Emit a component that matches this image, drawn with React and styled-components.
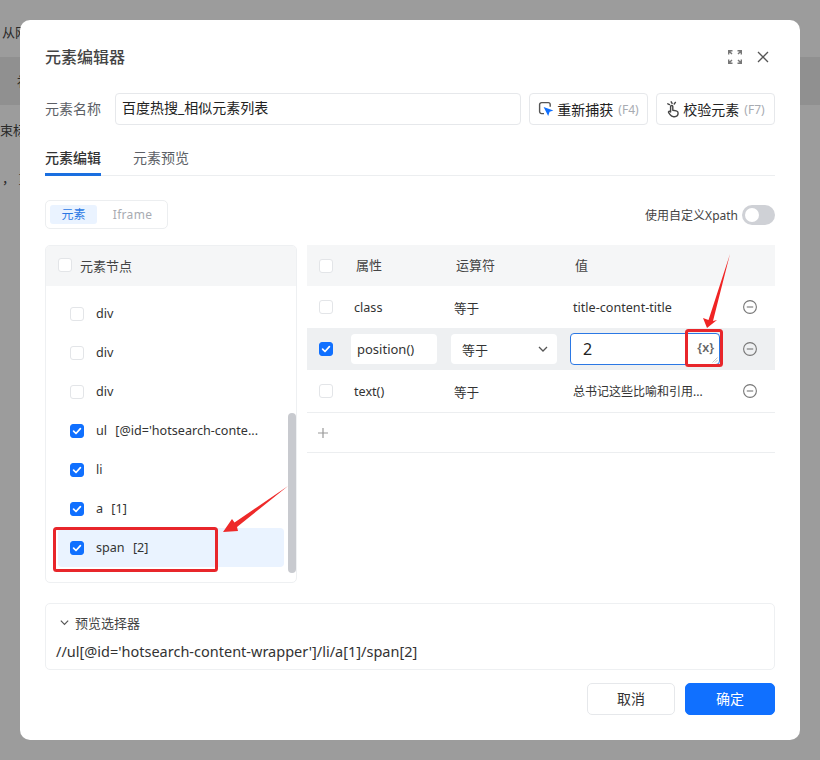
import React from 'react'
import styled, { createGlobalStyle } from 'styled-components'

const GlobalStyle = createGlobalStyle`
  html, body { margin: 0; padding: 0; height: 100%; overflow: hidden; background: #fff; }
  body, input, button { font-family: "Noto Sans", "Noto Sans CJK SC", sans-serif; }
  * { box-sizing: border-box; }
`

const BLUE = '#1070ff'

const BehindPage = styled.div`
  height: 760px;
  overflow: hidden;
  font-size: 13px;
  color: #444;
`
const BehindLine = styled.div`
  height: ${p => p.$h}px;
  line-height: ${p => p.$h}px;
  padding-left: ${p => p.$left || 0}px;
  background: ${p => p.$band ? '#ebebeb' : 'transparent'};
  white-space: nowrap;
`
const Mask = styled.div`
  position: fixed;
  inset: 0;
  background: rgba(0, 0, 0, 0.39);
`
const Modal = styled.div`
  position: fixed;
  left: 20px;
  top: 20px;
  width: 780px;
  height: 720px;
  padding: 23px 25px 0;
  background: #fff;
  border-radius: 10px;
  display: flex;
  flex-direction: column;
`
const TitleRow = styled.div`
  height: 28px;
  display: flex;
  align-items: center;
  justify-content: space-between;
`
const Title = styled.div`
  font-size: 16px;
  font-weight: 500;
  color: #444;
  margin-top: -2px;
`
const TitleTools = styled.div`
  display: flex;
  align-items: center;
  gap: 15px;
  padding-right: 6px;
`
const NameRow = styled.div`
  margin-top: 22px;
  height: 32px;
  display: flex;
  align-items: center;
  gap: 8px;
`
const NameLabel = styled.div`
  width: 62px;
  font-size: 14px;
  color: #5c5f66;
  margin-top: -2px;
`
const NameInput = styled.div`
  flex: 1;
  height: 32px;
  line-height: 28px;
  padding-left: 6px;
  border: 1px solid #e6e8eb;
  border-radius: 4px;
  font-size: 14px;
  color: #222;
`
const ToolButton = styled.div`
  width: 119px;
  height: 32px;
  display: flex;
  align-items: center;
  justify-content: center;
  gap: 3px;
  border: 1px solid #e6e8eb;
  border-radius: 4px;
  font-size: 14px;
  color: #222;
  white-space: nowrap;
`
const Shortcut = styled.span`
  font-size: 12px;
  color: #a8abb2;
  margin-left: 2px;
`
const Tabs = styled.div`
  margin-top: 17px;
  height: 34px;
  display: flex;
  gap: 32px;
  border-bottom: 1px solid #eceef0;
`
const Tab = styled.div`
  height: 34px;
  line-height: 32px;
  font-size: 14px;
  font-weight: ${p => p.$active ? 500 : 400};
  color: ${p => p.$active ? '#333' : '#5c5f66'};
  border-bottom: 3px solid ${p => p.$active ? '#1a6fe0' : 'transparent'};
`
const ModeRow = styled.div`
  margin-top: 24px;
  height: 29px;
  display: flex;
  align-items: center;
  justify-content: space-between;
`
const Segment = styled.div`
  width: 123px;
  height: 29px;
  padding: 4px;
  display: flex;
  align-items: center;
  border: 1px solid #eceef0;
  border-radius: 5px;
`
const SegmentItem = styled.div`
  flex: none;
  width: ${p => p.$active ? 47 : 71}px;
  height: 19px;
  line-height: 19px;
  text-align: center;
  font-size: 12px;
  border-radius: 3px;
  color: ${p => p.$active ? '#2b78e4' : '#a8abb2'};
  background: ${p => p.$active ? '#eaf3ff' : 'transparent'};
  letter-spacing: ${p => p.$active ? 0 : '0.3px'};
`
const SwitchGroup = styled.div`
  display: flex;
  align-items: center;
  gap: 4px;
  font-size: 12px;
  color: #444;
`
const SwitchTrack = styled.div`
  width: 33px;
  height: 20px;
  padding: 3px;
  border-radius: 10px;
  background: #cfd1d6;
`
const SwitchKnob = styled.div`
  width: 14px;
  height: 14px;
  border-radius: 50%;
  background: #fff;
`
const Panels = styled.div`
  margin-top: 16px;
  height: 338px;
  display: flex;
  gap: 10px;
`
const NodePanel = styled.div`
  position: relative;
  width: 252px;
  border: 1px solid #eef0f2;
  border-radius: 5px;
  overflow: hidden;
`
const PanelHead = styled.div`
  height: 40px;
  padding: 0 0 2px 12px;
  display: flex;
  align-items: center;
  gap: 8px;
  background: #f5f6f7;
  font-size: 13px;
  color: #444;
`
const NodeList = styled.div`
  padding: 8px 0 0 12px;
`
const NodeRow = styled.div`
  width: 226px;
  height: 39px;
  padding-left: 12px;
  display: flex;
  align-items: center;
  gap: 12px;
  border-radius: 4px;
  background: ${p => p.$selected ? '#eaf3ff' : 'transparent'};
  font-size: 12.6px;
  color: #333;
  white-space: nowrap;
`
const NodeName = styled.span`
  word-spacing: 5px;
`
const ScrollThumb = styled.div`
  position: absolute;
  right: 0;
  top: 167px;
  width: 8px;
  height: 160px;
  border-radius: 4px;
  background: #c8cacf;
`
const Box = styled.span`
  flex: none;
  width: 14px;
  height: 14px;
  display: inline-flex;
  align-items: center;
  justify-content: center;
  border-radius: 3px;
  background: ${p => p.$on ? BLUE : '#fff'};
  border: 1px solid ${p => p.$on ? BLUE : '#e3e5e8'};
`
const AttrPanel = styled.div`
  flex: 1;
`
const AttrRow = styled.div`
  height: ${p => p.$h || 42}px;
  display: grid;
  grid-template-columns: 44px 100px 119px 150px 1fr;
  align-items: center;
  background: ${p => p.$head ? '#f5f6f7' : p.$active ? '#eef0f2' : 'transparent'};
  border-bottom: ${p => p.$line ? '1px solid #eceef0' : 'none'};
  font-size: 12.6px;
  color: #333;
`
const BoxCell = styled.div`
  padding-left: 12px;
  display: flex;
`
const HeadCell = styled.div`
  padding: 0 0 3px 5px;
  font-size: 13px;
  color: #444;
`
const TextCell = styled.div`
  padding-left: 3px;
  white-space: nowrap;
  font-size: ${p => p.$small ? '12px' : 'inherit'};
`
const FieldBox = styled.div`
  width: ${p => p.$w}px;
  height: 30px;
  padding: 0 8px 0 ${p => p.$pad}px;
  display: flex;
  align-items: center;
  justify-content: space-between;
  background: #fff;
  border-radius: 4px;
  font-size: 13px;
  color: #333;
`
const ValueField = styled.div`
  position: relative;
  width: 150px;
  height: 32px;
  padding-left: 12px;
  line-height: 30px;
  border: 1px solid #2b78e4;
  border-radius: 4px;
  background: #fff;
  font-size: 16px;
  color: #222;
`
const VarTag = styled.span`
  position: absolute;
  right: 5px;
  top: -1px;
  font-size: 12.5px;
  font-weight: 600;
  color: #666;
`
const Grip = styled.svg`
  position: absolute;
  right: 1px;
  bottom: 1px;
`
const ActionCell = styled.div`
  display: flex;
  justify-content: center;
  padding-left: 5px;
`
const AddRow = styled.div`
  height: 40px;
  padding-left: 10px;
  display: flex;
  align-items: center;
  border-bottom: 1px solid #eceef0;
`
const Preview = styled.div`
  margin-top: 20px;
  height: 67px;
  padding: 7px 10px;
  border: 1px solid #eef0f2;
  border-radius: 5px;
`
const PreviewHead = styled.div`
  height: 22px;
  display: flex;
  align-items: center;
  gap: 5px;
  padding-left: 3px;
  font-size: 13px;
  color: #444;
`
const PreviewPath = styled.div`
  margin-top: 8px;
  font-size: 14.5px;
  color: #333;
  white-space: nowrap;
`
const Footer = styled.div`
  margin-top: 13px;
  display: flex;
  justify-content: flex-end;
  gap: 10px;
`
const FootButton = styled.div`
  width: ${p => p.$primary ? 90 : 88}px;
  height: 32px;
  line-height: 29px;
  text-align: center;
  border-radius: 5px;
  font-size: 14px;
  color: ${p => p.$primary ? '#fff' : '#333'};
  background: ${p => p.$primary ? BLUE : '#fff'};
  border: 1px solid ${p => p.$primary ? BLUE : '#e6e8eb'};
`
const Marks = styled.svg`
  position: fixed;
  left: 0;
  top: 0;
  pointer-events: none;
`

const Check = ({ on }) => (
  <Box $on={on}>
    {on && (
      <svg width="10" height="10" viewBox="0 0 10 10" fill="none">
        <path d="M1.6 5.2 4 7.5l4.4-4.9" stroke="#fff" strokeWidth="1.7" strokeLinecap="round" strokeLinejoin="round" />
      </svg>
    )}
  </Box>
)

const ExpandIcon = () => (
  <svg width="14" height="14" viewBox="0 0 14 14" fill="none" stroke="#777" strokeWidth="1.4">
    <path d="M0.7 4.5V0.7H4.5M0.9 0.9 4 4" />
    <path d="M9.5 0.7h3.8v3.8M13.1 0.9 10 4" />
    <path d="M0.7 9.5v3.8h3.8M0.9 13.1 4 10" />
    <path d="M9.5 13.3h3.8V9.5M13.1 13.1 10 10" />
  </svg>
)

const CloseIcon = () => (
  <svg width="12" height="12" viewBox="0 0 12 12" fill="none" stroke="#555" strokeWidth="1.3">
    <path d="M1 1l10 10M11 1 1 11" />
  </svg>
)

const CaptureIcon = () => (
  <svg width="16" height="16" viewBox="0 0 16 16" fill="none">
    <path d="M6 12.6H3.6a2 2 0 0 1-2-2V3.6a2 2 0 0 1 2-2h6.6a2 2 0 0 1 2 2v2.2" stroke="#555" strokeWidth="1.4" />
    <path d="M5.6 6 15.4 9.4 11.6 10.8 10.2 15Z" fill={BLUE} />
  </svg>
)

const HandIcon = () => (
  <svg width="14" height="17" viewBox="0 0 14 17" fill="none" stroke="#444" strokeWidth="1.4" strokeLinecap="round" strokeLinejoin="round">
    <path d="M4.6 11V5.6a1.1 1.1 0 0 1 2.2 0v3.6l3.4.7c1.2.3 1.9 1.1 1.9 2.2 0 2-1.4 3.6-3.6 3.6H7.6c-1.5 0-2.6-.7-3.3-1.8L2.6 11.6c-.5-1 .8-1.8 1.6-.9" />
    <path d="M5.2 0.8l.9 1.6M1.8 2.8l1.7.8M9.4 1.4 8.2 3" />
  </svg>
)

const MinusIcon = () => (
  <svg width="14" height="14" viewBox="0 0 14 14" fill="none" stroke="#777" strokeWidth="1.1">
    <circle cx="7" cy="7" r="6.4" />
    <path d="M3.8 7h6.4" />
  </svg>
)

const Chevron = ({ size = 12, color = '#555' }) => (
  <svg width={size} height={size} viewBox="0 0 12 12" fill="none" stroke={color} strokeWidth="1.3">
    <path d="M2 4l4 4 4-4" />
  </svg>
)

const nodes = [
  { name: 'div' },
  { name: 'div' },
  { name: 'div' },
  { name: "ul [@id='hotsearch-conte...", on: true },
  { name: 'li', on: true },
  { name: 'a [1]', on: true },
  { name: 'span [2]', on: true, selected: true },
]

export default function App() {
  return (
    <>
      <GlobalStyle />
      <BehindPage>
        <BehindLine $h={20} />
        <BehindLine $h={24} $left={2}>从网页中采集数据</BehindLine>
        <BehindLine $h={13} />
        <BehindLine $h={48} $left={17} $band>补</BehindLine>
        <BehindLine $h={50} $left={0}>束标</BehindLine>
        <BehindLine $h={46} $left={2}>， 重</BehindLine>
      </BehindPage>
      <Mask />
      <Modal>
        <TitleRow>
          <Title>元素编辑器</Title>
          <TitleTools>
            <ExpandIcon />
            <CloseIcon />
          </TitleTools>
        </TitleRow>

        <NameRow>
          <NameLabel>元素名称</NameLabel>
          <NameInput>百度热搜_相似元素列表</NameInput>
          <ToolButton><CaptureIcon />重新捕获<Shortcut>(F4)</Shortcut></ToolButton>
          <ToolButton><HandIcon />校验元素<Shortcut>(F7)</Shortcut></ToolButton>
        </NameRow>

        <Tabs>
          <Tab $active>元素编辑</Tab>
          <Tab>元素预览</Tab>
        </Tabs>

        <ModeRow>
          <Segment>
            <SegmentItem $active>元素</SegmentItem>
            <SegmentItem>Iframe</SegmentItem>
          </Segment>
          <SwitchGroup>
            使用自定义Xpath
            <SwitchTrack><SwitchKnob /></SwitchTrack>
          </SwitchGroup>
        </ModeRow>

        <Panels>
          <NodePanel>
            <PanelHead><Check />元素节点</PanelHead>
            <NodeList>
              {nodes.map((n, i) => (
                <NodeRow key={i} $selected={n.selected}>
                  <Check on={n.on} />
                  <NodeName>{n.name}</NodeName>
                </NodeRow>
              ))}
            </NodeList>
            <ScrollThumb />
          </NodePanel>

          <AttrPanel>
            <AttrRow $head $h={41}>
              <BoxCell><Check /></BoxCell>
              <HeadCell>属性</HeadCell>
              <HeadCell>运算符</HeadCell>
              <HeadCell>值</HeadCell>
            </AttrRow>
            <AttrRow>
              <BoxCell><Check /></BoxCell>
              <TextCell>class</TextCell>
              <TextCell>等于</TextCell>
              <TextCell>title-content-title</TextCell>
              <ActionCell><MinusIcon /></ActionCell>
            </AttrRow>
            <AttrRow $active>
              <BoxCell><Check on /></BoxCell>
              <FieldBox $w={86} $pad={6}>position()</FieldBox>
              <FieldBox $w={106} $pad={11}>等于<Chevron /></FieldBox>
              <ValueField>
                2
                <VarTag>{'{x}'}</VarTag>
                <Grip width="6" height="6" viewBox="0 0 6 6" stroke="#aaa" strokeWidth="0.7">
                  <path d="M0.5 5.5 5.5 0.5M3 5.5 5.5 3" />
                </Grip>
              </ValueField>
              <ActionCell><MinusIcon /></ActionCell>
            </AttrRow>
            <AttrRow $line $h={43}>
              <BoxCell><Check /></BoxCell>
              <TextCell>text()</TextCell>
              <TextCell>等于</TextCell>
              <TextCell $small>总书记这些比喻和引用...</TextCell>
              <ActionCell><MinusIcon /></ActionCell>
            </AttrRow>
            <AddRow>
              <svg width="12" height="12" viewBox="0 0 12 12" stroke="#999" strokeWidth="1.2">
                <path d="M6 1v10M1 6h10" />
              </svg>
            </AddRow>
          </AttrPanel>
        </Panels>

        <Preview>
          <PreviewHead><Chevron size={11} />预览选择器</PreviewHead>
          <PreviewPath>//ul[@id='hotsearch-content-wrapper']/li/a[1]/span[2]</PreviewPath>
        </Preview>

        <Footer>
          <FootButton>取消</FootButton>
          <FootButton $primary>确定</FootButton>
        </Footer>
      </Modal>

      <Marks width="820" height="760" viewBox="0 0 820 760" fill="none">
        <rect x="54.5" y="528.5" width="162" height="42" rx="2" stroke="#e8262b" strokeWidth="3" />
        <rect x="686.5" y="330.5" width="35" height="35" rx="2" stroke="#e8262b" strokeWidth="3" />
        <polygon points="223,532 232,519 234.5,522.5 288,486 237,527 238,531" fill="#ee2a2a" />
        <polygon points="707,328 703,318 708.5,320 730,254 713,321 717,320" fill="#f02424" />
      </Marks>
    </>
  )
}
